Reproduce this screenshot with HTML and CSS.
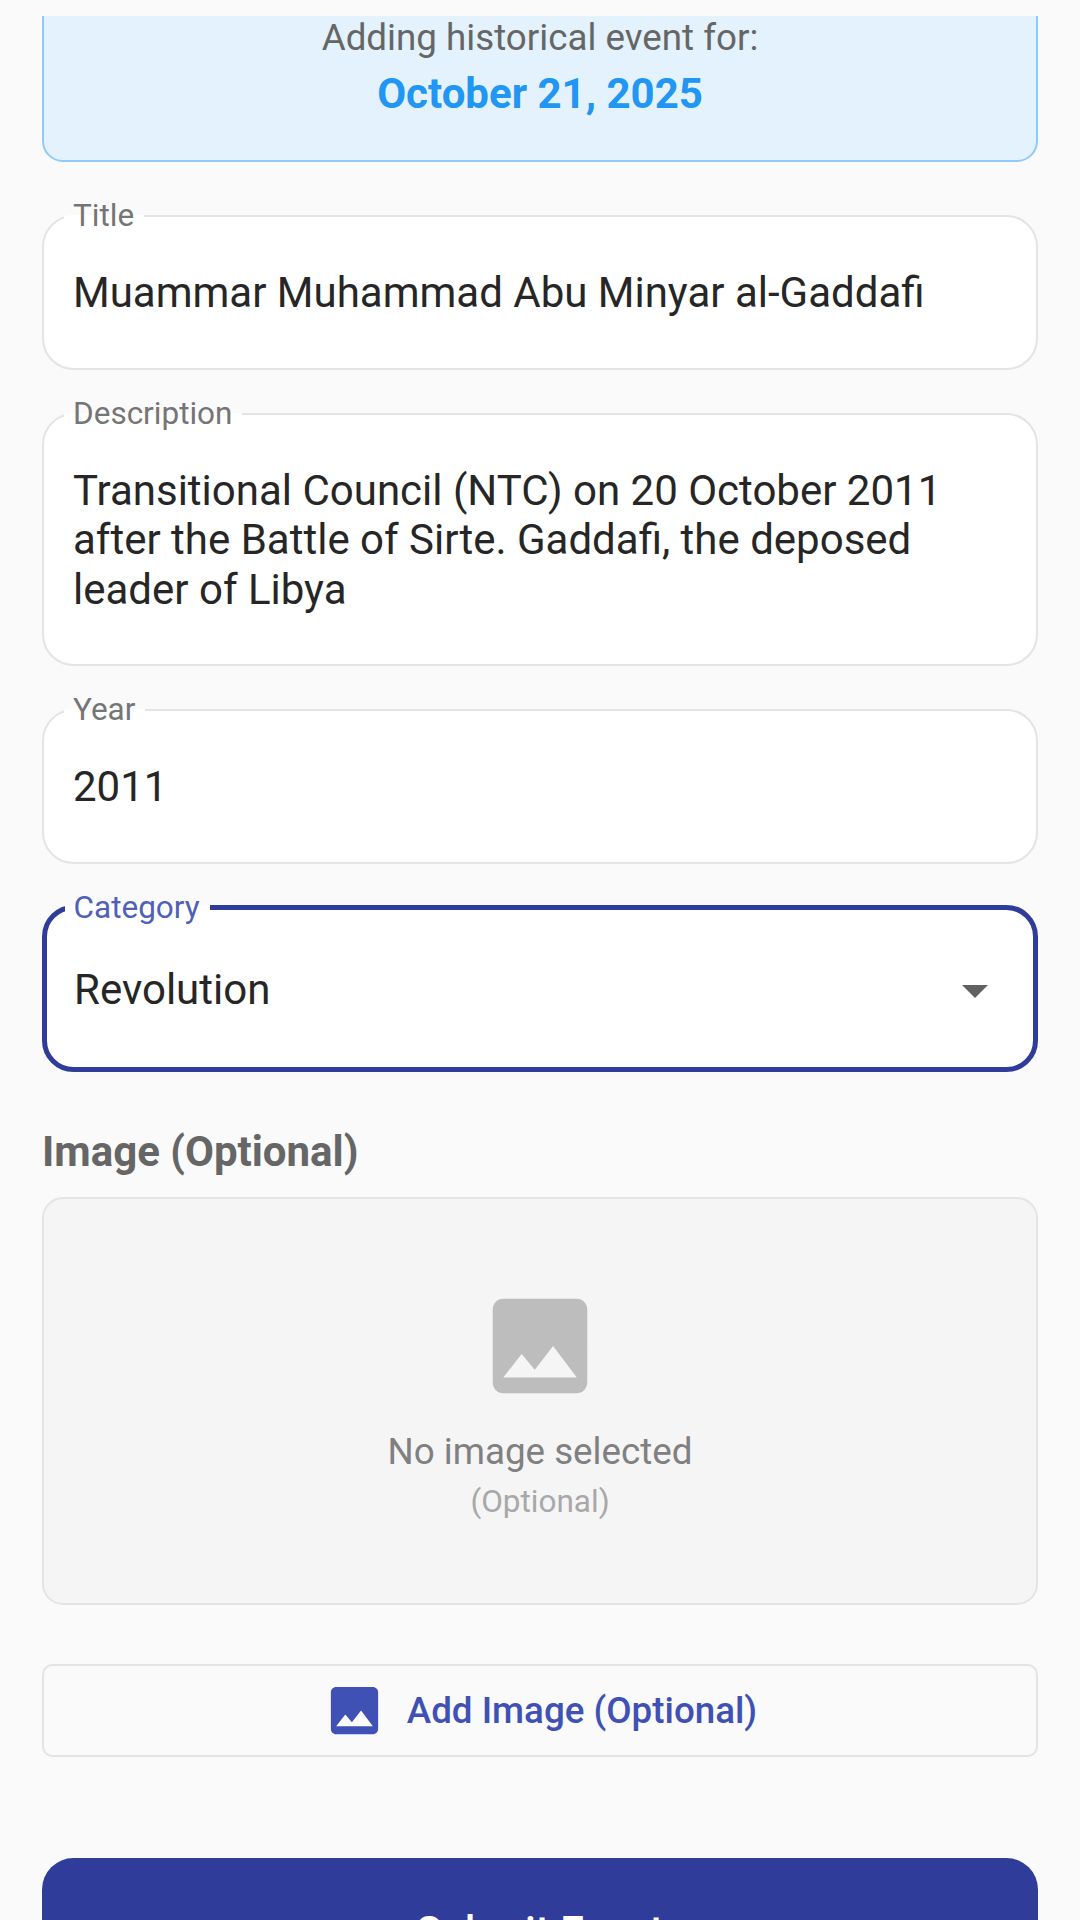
FILE: index.html
```html
<!DOCTYPE html>
<html lang="en">
<head>
<meta charset="utf-8">
<title>Add Event</title>
<link rel="stylesheet" href="styles.css">
</head>
<body>
<main class="scroll">
  <section class="info">
    <p class="info-label">Adding historical event for:</p>
    <p class="info-date">October 21, 2025</p>
  </section>

  <form class="form">
    <fieldset class="field">
      <legend>Title</legend>
      <div class="value">Muammar Muhammad Abu Minyar al-Gaddafi</div>
    </fieldset>
    <fieldset class="field">
      <legend>Description</legend>
      <div class="value">Transitional Council (NTC) on 20 October 2011<br>after the Battle of Sirte. Gaddafi, the deposed<br>leader of Libya</div>
    </fieldset>
    <fieldset class="field">
      <legend>Year</legend>
      <div class="value">2011</div>
    </fieldset>
    <fieldset class="field field-focus">
      <legend>Category</legend>
      <div class="value select-row">
        <span>Revolution</span>
        <svg class="arrow" viewBox="7 10 10 5" aria-hidden="true"><path d="M7 10l5 5 5-5z"/></svg>
      </div>
    </fieldset>
  </form>

  <h2 class="section-title">Image (Optional)</h2>
  <div class="placeholder">
    <svg class="placeholder-icon" viewBox="0 0 24 24" aria-hidden="true"><path d="M21 19V5c0-1.1-.9-2-2-2H5c-1.1 0-2 .9-2 2v14c0 1.1.9 2 2 2h14c1.1 0 2-.9 2-2zM8.5 13.5l2.5 3.01L14.5 12l4.5 6H5l3.5-4.5z"/></svg>
    <p class="placeholder-text">No image selected</p>
    <p class="placeholder-sub">(Optional)</p>
  </div>

  <button class="add-btn" type="button">
    <svg class="add-icon" viewBox="0 0 24 24" aria-hidden="true"><path d="M21 19V5c0-1.1-.9-2-2-2H5c-1.1 0-2 .9-2 2v14c0 1.1.9 2 2 2h14c1.1 0 2-.9 2-2zM8.5 13.5l2.5 3.01L14.5 12l4.5 6H5l3.5-4.5z"/></svg>
    <span>Add Image (Optional)</span>
  </button>

  <button class="submit-btn" type="button">Submit Event</button>
</main>
</body>
</html>
```
FILE: styles.css
```css
* { box-sizing: border-box; }
html, body { margin: 0; padding: 0; }
body {
  width: 1080px;
  height: 1920px;
  overflow: hidden;
  background: #fafafa;
  font-family: Roboto, "Noto Sans", sans-serif;
  padding-top: 16px;
}
p, h2 { margin: 0; }

.scroll {
  height: 1904px;
  overflow: hidden;
  padding: 0 42px;
}

.info {
  margin-top: -28.6px;
  padding: 26.4px 0 38px;
  background: #e3f2fd;
  border: 2.6px solid #90caf9;
  border-radius: 21px;
  text-align: center;
}
.info-label { font-size: 36.75px; line-height: 44px; color: #666; }
.info-date { margin-top: 6.5px; font-size: 42px; line-height: 56px; font-weight: 700; color: #2196f3; }

.form { margin-top: 38px; }
.field {
  margin: 0 0 28px;
  min-width: 0;
  padding: 36px 29px 50px;
  background: #fff;
  border: 2.6px solid #e4e4e4;
  border-radius: 31.5px;
}
.field legend {
  margin-left: -9px;
  padding: 0 10px 0 9px;
  font-size: 31.5px;
  line-height: 32px;
  height: 32px;
  color: #757575;
}
.value {
  font-size: 42px;
  line-height: 49.5px;
  color: #262626;
}

.field-focus {
  border: 5.25px solid #2f3c9a;
  padding: 41px 45px 53px 27px;
  margin-bottom: 0;
}
.field-focus legend { color: #4f60b8; margin-left: -9.5px; }
.select-row { display: flex; align-items: center; justify-content: space-between; }
.arrow { width: 26px; height: 13px; margin-top: 4px; fill: #616161; }

.section-title {
  margin-top: 57px;
  font-size: 42px;
  line-height: 46px;
  font-weight: 700;
  color: #666;
}

.placeholder {
  margin-top: 22px;
  height: 408px;
  padding-top: 84px;
  display: flex;
  flex-direction: column;
  align-items: center;
  background: #f5f5f5;
  border: 2.6px solid #e4e4e4;
  border-radius: 21px;
}
.placeholder-icon { width: 126px; height: 126px; fill: #bdbdbd; flex: none; }
.placeholder-text { margin-top: 21px; font-size: 36.75px; line-height: 44px; color: #808080; }
.placeholder-sub { margin-top: 9px; font-size: 31.5px; line-height: 38px; color: #a8a8a8; }

.add-btn {
  margin-top: 59px;
  width: 100%;
  height: 93px;
  display: flex;
  align-items: center;
  justify-content: center;
  gap: 21px;
  background: transparent;
  border: 2.6px solid #e4e4e4;
  border-radius: 10.5px;
  font-family: inherit;
  font-size: 36.75px;
  font-weight: 500;
  color: #3f51b5;
}
.add-icon { width: 63px; height: 63px; fill: #3f51b5; flex: none; }

.submit-btn {
  display: block;
  margin-top: 101px;
  width: 100%;
  height: 147px;
  padding: 0;
  background: #2f3c9a;
  border: 0;
  border-radius: 31.5px;
  font-family: inherit;
  font-size: 42px;
  font-weight: 500;
  color: #fff;
}
```
